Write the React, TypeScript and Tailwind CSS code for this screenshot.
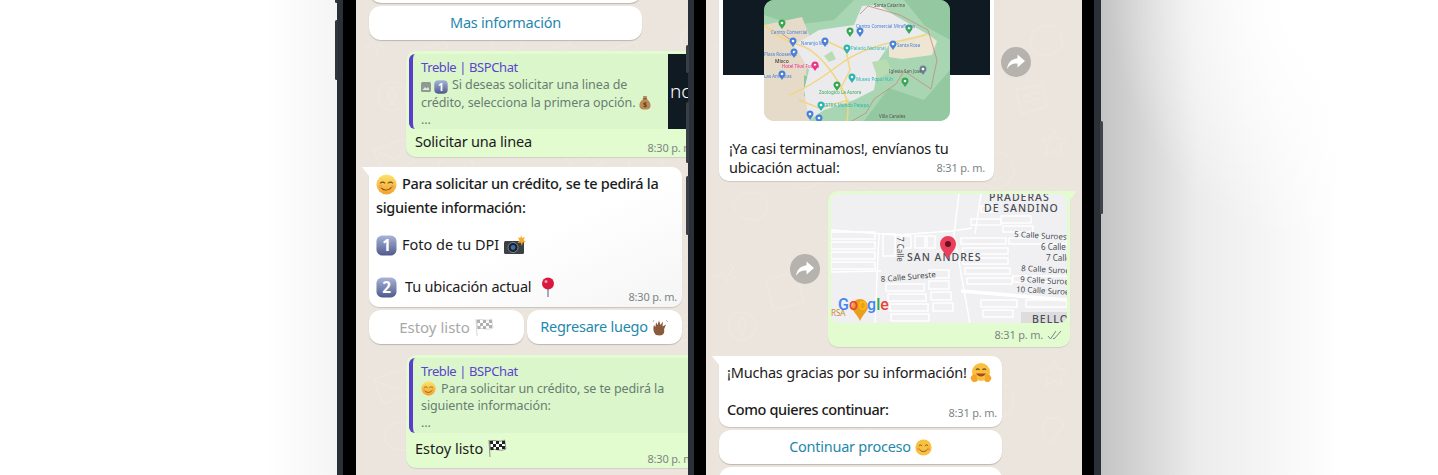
import React from "react";

const font = { fontFamily: '"Noto Sans", sans-serif' };

const Wallpaper = ({ id }: { id: string }) => (
    <svg className="absolute inset-0 w-full h-full" aria-hidden="true">
        <defs>
            <pattern id={id} width="190" height="230" patternUnits="userSpaceOnUse">
                <g fill="none" stroke="#efe9e2" strokeWidth="1" strokeLinecap="round" strokeLinejoin="round">
                    <circle cx="36" cy="96" r="14" />
                    <path d="M36 86l4 10-4 10-4-10z" />
                    <path d="M20 30l8 8-6 6 8 4M8 48l10-4 4 10" />
                    <path d="M60 50l30-8 8 30-30 8z" />
                    <path d="M18 150l30-12 10 24-30 12z M18 150l22 10 18-22" />
                    <path d="M140 30c10-8 24-4 26 8 2 12-10 20-22 16-10-4-12-16-4-24z" />
                    <path d="M120 90l26-6 6 22-26 8z M128 96l14-4 M130 102l14-4" />
                    <path d="M158 130l4 9 9 1-7 6 2 10-8-5-8 5 2-10-7-6 9-1z" />
                    <circle cx="100" cy="170" r="18" />
                    <path d="M92 166h1M108 166h1M92 176c4 4 12 4 16 0" />
                    <path d="M30 200c8-10 24-10 30 0s-4 22-16 20-20-10-14-20z" />
                    <path d="M150 190c6-4 14-2 18 4l-14 20c-8-4-10-16-4-24z" />
                </g>
            </pattern>
        </defs>
        <rect width="100%" height="100%" fill={`url(#${id})`} />
    </svg>
);

const Smirk = ({ size = 21 }: { size?: number }) => (
    <svg width={size} height={size} viewBox="0 0 22 22" className="flex-none">
        <defs>
            <linearGradient id="face" x1="0" y1="0" x2="0" y2="1">
                <stop offset="0" stopColor="#fde36c" />
                <stop offset="1" stopColor="#f3a12a" />
            </linearGradient>
        </defs>
        <circle cx="11" cy="11" r="10.5" fill="url(#face)" />
        <path d="M4.5 9.500c1.500-1.200 3.300-1.200 4.800 0M12.700 9.500c1.500-1.200 3.300-1.200 4.800 0" stroke="#6d4a1b" strokeWidth="1.100" fill="none" strokeLinecap="round" />
        <path d="M6 15c3 2.600 7 2.400 10-.8" stroke="#6d4a1b" strokeWidth="1.100" fill="none" strokeLinecap="round" />
        <circle cx="4.800" cy="13" r="1.800" fill="#f08a5a" opacity="0.5" />
        <circle cx="17.200" cy="13" r="1.800" fill="#f08a5a" opacity="0.5" />
    </svg>
);

const Keycap = ({ n, size = 21 }: { n: string; size?: number }) => (
    <svg width={size} height={size} viewBox="0 0 22 22" className="flex-none">
        <defs>
            <linearGradient id="cap" x1="0" y1="0" x2="0" y2="1">
                <stop offset="0" stopColor="#a9b4d8" />
                <stop offset="1" stopColor="#4f5a8c" />
            </linearGradient>
        </defs>
        <rect x="0.500" y="0.500" width="21" height="21" rx="6" fill="url(#cap)" />
        <text x="11" y="17" textAnchor="middle" fontSize="16" fontWeight="700" fill="#fff" fontFamily='"Noto Sans", sans-serif'>
            {n}
        </text>
    </svg>
);

const Camera = () => (
    <svg width="22" height="20" viewBox="0 0 22 20" className="flex-none">
        <rect x="0" y="6" width="20" height="13" rx="1.500" fill="#3b4047" />
        <circle cx="9" cy="12.500" r="5" fill="#1c2026" stroke="#7d8794" />
        <circle cx="9" cy="12.500" r="2.400" fill="#3b6ea8" />
        <path d="M17 0l1 3 3-1-1.600 3 2.600 2-3.400.4L18 11l-1.400-3.400L13.500 8l2-2.600L14 2.500l2.400.6z" fill="#f7a928" />
    </svg>
);

const Pin = () => (
    <svg width="14" height="20" viewBox="0 0 14 20" className="flex-none">
        <rect x="6" y="10" width="2" height="10" fill="#a7adb4" />
        <circle cx="7" cy="6.500" r="6" fill="#d9173f" />
        <circle cx="5" cy="4.500" r="1.500" fill="#f59bb0" />
    </svg>
);

const Flag = ({ faded }: { faded?: boolean }) => (
    <svg width="20" height="20" viewBox="0 0 20 20" className={faded ? "flex-none opacity-35" : "flex-none"}>
        <path d="M2 2l1 17" stroke="#8a8f96" strokeWidth="1" />
        <path d="M2.500 3c5-2 9 2 15-1l1.500 9c-6 3-10-1-15 1z" fill="#fff" stroke="#222" strokeWidth="0.500" />
        <path d="M3 3h3v3H3zM9 3h3v3H9zM15 3h3v3h-3zM6 6h3v3H6zM12 6h3v3h-3zM3.500 9h3v3h-3zM9 9h3v3H9zM15 8h3v3h-3z" fill="#222" />
    </svg>
);

const Wave = () => (
    <svg width="17" height="17" viewBox="0 0 17 17" className="flex-none">
        <path d="M4 16C1 13 1 9 2 6l1.500 2L4 3l1.500 3L7 1.500 8.500 6 11 2.500 10.500 7.500 14 5.500 12 10.500c1 3-1 6-4 6z" fill="#8a5a3c" />
        <path d="M1 3l1-2M14 1l2 2" stroke="#b9b2a6" strokeWidth="1" />
    </svg>
);

const MoneyBag = () => (
    <svg width="12" height="15" viewBox="0 0 12 15" className="inline-block align-[-3px]">
        <path d="M4 1h4L7.500 4c3 1.500 4.500 4.500 4 7.500C11 14 9 14.500 6 14.500S1 14 .5 11.500C0 8.500 1.500 5.500 4.500 4z" fill="#b98a55" />
        <path d="M3.800 3.800h4.400" stroke="#6f4d28" strokeWidth="1" />
        <text x="6" y="12" textAnchor="middle" fontSize="7" fill="#5d3c1b" fontWeight="700">$</text>
    </svg>
);

const Hug = () => (
    <svg width="22" height="22" viewBox="0 0 22 22" className="flex-none">
        <circle cx="11" cy="10" r="9" fill="#fbbf3f" />
        <path d="M6 8c1-1.500 2.500-1.500 3.500 0M12.500 8c1-1.500 2.500-1.500 3.500 0" stroke="#6d4a1b" fill="none" strokeWidth="1.100" />
        <path d="M6 11.500c2.500 4 7.500 4 10 0z" fill="#a5481f" />
        <path d="M0.500 16c1-3 4-5 6-3l1 6c-2 2-6 1.500-7-3zM21.500 16c-1-3-4-5-6-3l-1 6c2 2 6 1.500 7-3z" fill="#f5a62a" />
    </svg>
);

const Smile = () => (
    <svg width="17" height="17" viewBox="0 0 22 22" className="flex-none">
        <circle cx="11" cy="11" r="10.500" fill="#f8c13f" />
        <path d="M5 9c1.200-1.600 3-1.600 4.200 0M12.800 9c1.200-1.600 3-1.600 4.200 0" stroke="#6d4a1b" strokeWidth="1.200" fill="none" />
        <path d="M6 13.500c2.600 3.600 7.400 3.600 10 0" stroke="#6d4a1b" strokeWidth="1.200" fill="none" />
        <circle cx="4.500" cy="13" r="2" fill="#f0744f" opacity="0.5" />
        <circle cx="17.500" cy="13" r="2" fill="#f0744f" opacity="0.5" />
    </svg>
);

const ForwardButton = ({ className = "" }: { className?: string }) => (
    <div className={`flex-none w-[30px] h-[30px] rounded-full bg-[#b6b2ad] flex items-center justify-center ${className}`}>
        <svg width="20" height="18" viewBox="0 0 20 18">
            <path d="M11.500 1.500L19 8l-7.500 6.500v-4C6.500 10.300 3.500 12 1 16c.8-6 4.500-10 10.500-10.700z" fill="#fff" />
        </svg>
    </div>
);

const ActionButton = ({ children, className = "" }: { children: React.ReactNode; className?: string }) => (
    <div className={`h-[34px] flex items-center justify-center gap-1 rounded-[12px] bg-white shadow-[0_1px_1px_rgba(0,0,0,0.2)] text-[14.5px] tracking-[-0.25px] text-[#1f88ac] ${className}`}>
        {children}
    </div>
);

const Time = ({ children, className = "" }: { children: React.ReactNode; className?: string }) => (
    <span className={`flex-none text-[11px] tracking-[-0.2px] leading-[14px] text-[#7c8585] whitespace-nowrap ${className}`}>{children}</span>
);

const ReplyBubble = ({
    quote,
    thumb,
    children,
}: {
    quote: React.ReactNode;
    thumb?: boolean;
    children: React.ReactNode;
}) => (
    <div className="ml-[50px] w-[296px] rounded-[10px] bg-[#e2fccf] shadow-[0_1px_1px_rgba(0,0,0,0.1)] p-[3px] pb-0">
        <div className="flex h-[75px] rounded-[6px] overflow-hidden bg-[#dcf6cc] border-l-4 border-[#5a3dcc]">
            <div className="w-[255px] flex-none pl-2 pt-[5px]">
                <div className="text-[13px] tracking-[-0.4px] leading-[17px] text-[#5a45cf]">Treble | BSPChat</div>
                <div className="text-[12.5px] tracking-[-0.1px] leading-[17px] text-[#687d71]">{quote}</div>
            </div>
            {thumb && (
                <div className="w-[40px] bg-[#101a22] flex items-center text-white text-[19px] font-light overflow-hidden">
                    <span className="pl-[2px]">nc</span>
                </div>
            )}
        </div>
        {children}
    </div>
);

function MexicoMap() {
    const pins: [number, number, string][] = [
        [18, 25, "#34a853"], [29, 43, "#4a80d8"], [30, 54, "#4a80d8"], [61, 43, "#4a80d8"],
        [86, 33, "#34a853"], [96, 33, "#4a80d8"], [83, 50, "#2bb5b0"], [129, 46, "#4a80d8"],
        [145, 30, "#34a853"], [159, 71, "#6f7f96"], [141, 83, "#34a853"], [51, 67, "#e8348a"],
        [18, 76, "#4a80d8"], [73, 87, "#34a853"], [88, 79, "#2bb5b0"], [57, 107, "#2bb5b0"],
        [46, 116, "#4a80d8"], [55, 120, "#4a80d8"],
    ];
    return (
        <svg width="186" height="121" viewBox="0 0 186 121" className="rounded-[10px] block relative blur-[0.5px]">
            <rect width="186" height="121" fill="#a9d6b2" />
            <path d="M100 121L125 88 160 100 186 70V121zM0 0h90L70 20 30 25 0 15zM140 0h46v40l-25-14z" fill="#93c8a0" />
            <path d="M0 25l38-8 12 30-8 25 4 49H0z" fill="#e6dac9" />
            <path d="M40 75l10 5-2 20-8-4z" fill="#8fc59b" />
            <path d="M30 45l25-15 35-5 8-19 17-1 15 10 35 20-40 10-10 15-5 30-20 10-30 10-15 10-5-30 5-20z" fill="#ebebee" />
            <path d="M125 45l40-10 8 6-5 14-30 4-13-2z" fill="#eee6d2" />
            <path d="M60 56l8-5 4 8-7 3zM108 62l14-3 6 12-14 8z" fill="#b9dcb3" />
            <path d="M0 25c10 8 20 16 35 20s30 22 40 38 10 25 8 38M25 95c15-5 30-15 50-30s40-20 55-23 25-5 33-8M35 100l20 8 30-8M60 40l22 10 4 20-10 20" stroke="#f3d57f" strokeWidth="1.500" fill="none" />
            <path d="M96 14l8-8 32 9 28 15 9 30-6 29-27-18-8 13-22 15-8 14-16 9M30 42l-12-8" stroke="#c48a78" strokeWidth="0.800" fill="none" />
            {pins.map(([x, y, c]) => (
                <g key={`${x}-${y}`}>
                    <path d={`M${x - 3.500} ${y - 2}a3.500 3.500 0 1 1 7 0c0 2-2 3.500-3.500 6-1.500-2.500-3.500-4-3.500-6z`} fill={c} />
                    <circle cx={x} cy={y - 2} r="1.300" fill="#fff" />
                </g>
            ))}
            <g fontSize="4.500" fontFamily='"Noto Sans", sans-serif' fill="#4a80d8">
                <text x="7" y="34">Centro Comercial</text>
                <text x="37" y="45">Naranjo Mall</text>
                <text x="0" y="56">Plaza Roosevelt</text>
                <text x="92" y="28">Centro Comercial Miraflores</text>
                <text x="133" y="47">Santa Rosa</text>
                <text x="0" y="78">Las Americas</text>
                <text x="60" y="107" fill="#2bb5b0">IRTRA Mundo Petapa</text>
                <text x="92" y="81" fill="#2bb5b0">Museo Popol Vuh</text>
                <text x="87" y="50" fill="#2bb5b0">Palacio Nacional</text>
                <text x="55" y="94" fill="#34a853">Zoologico La Aurora</text>
                <text x="18" y="68" fill="#e8348a">Hotel Tikal Futura</text>
                <text x="11" y="63" fill="#222" fontSize="5">Mixco</text>
                <text x="125" y="73" fill="#555">Iglesia San Jose</text>
                <text x="115" y="118" fill="#555">Villa Canales</text>
                <text x="110" y="7" fill="#555">Santa Catarina</text>
            </g>
        </svg>
    );
}

// street blocks: x, y, width, height
const blocks: [number, number, number, number][] = [
    [0, 38, 44, 7], [0, 48, 44, 7], [0, 58, 44, 7], [0, 68, 44, 7],
    [52, 40, 12, 22], [70, 42, 10, 12], [84, 42, 10, 12], [96, 42, 8, 12],
    [55, 90, 38, 7], [57, 100, 38, 7], [59, 110, 38, 7], [60, 120, 38, 7],
    [98, 76, 20, 8], [98, 87, 20, 8], [100, 98, 20, 8], [102, 109, 20, 8],
    [140, 25, 30, 6], [150, 12, 14, 6], [170, 22, 30, 7], [172, 32, 30, 6],
    [130, 44, 45, 6], [132, 54, 45, 6], [132, 64, 45, 6], [134, 74, 45, 6], [136, 84, 45, 6],
    [150, 106, 36, 7], [152, 116, 30, 7],
    [178, 44, 58, 6], [182, 82, 54, 6], [195, 106, 41, 7],
];

function SanAndresMap() {
    return (
        <svg width="236" height="129" viewBox="0 0 236 129" className="block rounded-[8px]">
            <rect width="236" height="129" fill="#f0f0f2" />
            <g stroke="#fff" strokeWidth="1.400" fill="none">
                {blocks.map(([x, y, w, h]) => (
                    <rect key={`${x}-${y}`} x={x} y={y} width={w} height={h} />
                ))}
                <path d="M0 36l66 5 55-4 20-3M48 40l-4 90M128 0l-5 40 16 90M150 0l-6 40M0 78l50-1" />
                <path d="M130 97l106 9" strokeWidth="3.500" />
            </g>
            <rect x="190" y="118" width="46" height="11" fill="#dddde0" />
            <g fontFamily='"Noto Sans", sans-serif' fill="#4a4d52">
                <text x="158" y="7" fontSize="10.500" fontWeight="500" letterSpacing="1">PRADERAS</text>
                <text x="153" y="18" fontSize="10.500" fontWeight="500" letterSpacing="1">DE SANDINO</text>
                <text x="76" y="67" fontSize="10.500" fontWeight="500" letterSpacing="1">SAN ANDRES</text>
                <text x="183" y="43" fontSize="8" transform="rotate(3 183 43)">5 Calle Suroest</text>
                <text x="210" y="56" fontSize="8">6 Calle</text>
                <text x="215" y="67" fontSize="8">7 Calle</text>
                <text x="190" y="77" fontSize="8" transform="rotate(3 190 77)">8 Calle Suroe</text>
                <text x="189" y="88" fontSize="8" transform="rotate(3 189 88)">9 Calle Suroe</text>
                <text x="185" y="98" fontSize="8" transform="rotate(3 185 98)">10 Calle Suroe</text>
                <text x="50" y="88" fontSize="8" transform="rotate(-5 50 88)">8 Calle Sureste</text>
                <text x="66" y="43" fontSize="8" transform="rotate(90 66 43)">7 Calle</text>
                <text x="201" y="129" fontSize="10.500" fontWeight="500" letterSpacing="1">BELLO</text>
                <text x="0" y="122" fontSize="8" fill="#c98a2b">RSA</text>
            </g>
            <path d="M21 113a8 8 0 1 1 16 0c0 4-5 7-8 14-3-7-8-10-8-14z" fill="#e9a021" />
            <path d="M109 50a8 8 0 1 1 16 0c0 5-5 9-8 15-3-6-8-10-8-15z" fill="#e8405c" />
            <circle cx="117" cy="50" r="3" fill="#6b0f20" />
            <text x="7" y="116" fontSize="16" fontWeight="500" fontFamily='"Roboto", sans-serif'>
                <tspan fill="#4285f4">G</tspan>
                <tspan fill="#ea4335">o</tspan>
                <tspan fill="#fbbc05">o</tspan>
                <tspan fill="#4285f4">g</tspan>
                <tspan fill="#34a853">l</tspan>
                <tspan fill="#ea4335">e</tspan>
            </text>
        </svg>
    );
}

function PhoneFrame({ children, className = "" }: { children: React.ReactNode; className?: string }) {
    return <div className={`relative flex flex-none h-full ${className}`}>{children}</div>;
}

export default function App() {
    return (
        <div className="relative flex w-[1438px] h-[475px] overflow-hidden bg-white pl-[337px]" style={font}>
            <div className="absolute left-[265px] top-0 w-[72px] h-full bg-gradient-to-l from-[#f5f5f5] to-white" />
            <div className="absolute left-[1101px] top-0 w-[240px] h-full bg-gradient-to-r from-[#c4c4c4] via-[#ececec] via-40% to-white" />
            <div className="absolute left-[1101px] top-0 w-[240px] h-[260px] bg-[radial-gradient(ellipse_at_top_right,white_15%,transparent_68%)]" />

            <PhoneFrame className="w-[351px] bg-[#2b3038] pl-[6px]">
                <div className="absolute -left-[2px] -top-[20px] w-[3px] h-[23px] bg-[#30353c] rounded-sm" />
                <div className="absolute -left-[2px] top-[20px] w-[3px] h-[60px] bg-[#30353c] rounded-sm" />
                <div className="flex flex-1 bg-black pl-[13px] overflow-hidden">
                    <div className="relative flex-1 bg-[#ebe5dd] overflow-hidden">
                        <Wallpaper id="wall-a" />
                        <div className="relative flex flex-col text-[#1b1b1b]">
                            <ActionButton className="ml-[13px] w-[273px] -mt-[31px]">&nbsp;</ActionButton>
                            <ActionButton className="ml-[13px] w-[273px] mt-[3px]">Mas información</ActionButton>

                            <div className="mt-[11px]">
                                <ReplyBubble
                                    thumb
                                    quote={
                                        <>
                                            <span className="inline-flex items-center gap-[3px] align-[-3px] mr-1">
                                                <svg width="10" height="10" viewBox="0 0 10 10">
                                                    <rect width="10" height="10" rx="1.500" fill="#8f9a92" />
                                                    <path d="M1.500 8l2.500-3 1.500 1.500L7 5l1.500 3z" fill="#e0ecd9" />
                                                </svg>
                                                <Keycap n="1" size={14} />
                                            </span>
                                            Si deseas solicitar una linea de crédito, selecciona la primera opción. <MoneyBag />
                                            <br />...
                                        </>
                                    }
                                >
                                    <div className="flex justify-between items-start h-[28px] pl-[3px] pr-[3px]">
                                        <span className="pl-[3px] text-[14.5px] tracking-[-0.2px] leading-[24px]">Solicitar una linea</span>
                                        <Time className="self-end mb-[2px]">8:30 p. m.</Time>
                                    </div>
                                </ReplyBubble>
                            </div>

                            <div className="relative mt-[10px] ml-[13px] w-[313px] h-[140px] rounded-[10px] rounded-tl-none bg-gradient-to-br from-white via-white to-[#f5f5f5] shadow-[0_1px_1px_rgba(0,0,0,0.15)] pl-[7px] pt-[6px]">
                                <div className="absolute -left-[7px] top-0 w-0 h-0 border-t-[9px] border-t-white border-l-[7px] border-l-transparent" />
                                <div className="flex items-center gap-[5px] h-[22px] text-[14.5px] tracking-[-0.3px] font-medium">
                                    <Smirk />
                                    <span>Para solicitar un crédito, se te pedirá la</span>
                                </div>
                                <div className="h-[24px] leading-[24px] text-[14.5px] tracking-[-0.3px] font-medium">siguiente información:</div>
                                <div className="flex items-center gap-[5px] h-[22px] mt-[15px] text-[14.5px]">
                                    <Keycap n="1" />
                                    <span>Foto de tu DPI</span>
                                    <Camera />
                                </div>
                                <div className="flex items-center gap-[8px] h-[22px] mt-[20px] text-[14.5px] tracking-[-0.2px]">
                                    <Keycap n="2" />
                                    <span>Tu ubicación actual</span>
                                    <span className="ml-[2px]"><Pin /></span>
                                    <Time className="ml-auto mr-[5px] mt-[19px]">8:30 p. m.</Time>
                                </div>
                            </div>

                            <div className="flex gap-[3px] mt-[3px] ml-[13px]">
                                <ActionButton className="w-[155px]">
                                    <span className="text-[15px] tracking-normal text-[#a8a8a8]">Estoy listo</span> <Flag faded />
                                </ActionButton>
                                <ActionButton className="w-[155px]">
                                    Regresare luego <Wave />
                                </ActionButton>
                            </div>

                            <div className="mt-[11px]">
                                <ReplyBubble
                                    quote={
                                        <>
                                            <span className="inline-block align-[-3px] mr-[5px]">
                                                <Smirk size={15} />
                                            </span>
                                            Para solicitar un crédito, se te pedirá la siguiente información:
                                            <br />...
                                        </>
                                    }
                                >
                                    <div className="flex justify-between items-start h-[35px] pl-[3px] pr-[3px]">
                                        <span className="flex items-center gap-[4px] pl-[3px] mt-[3px] text-[14.5px] leading-[24px]">
                                            Estoy listo <Flag />
                                        </span>
                                        <Time className="self-end mb-[2px]">8:30 p. m.</Time>
                                    </div>
                                </ReplyBubble>
                            </div>
                        </div>
                    </div>
                </div>
            </PhoneFrame>

            <PhoneFrame className="w-[413px] bg-[#2b3038] pl-[6px] pr-[7px]">
                <div className="absolute -left-[2px] top-[45px] w-[3px] h-[28px] bg-[#3a3f46] rounded-sm" />
                <div className="absolute -left-[2px] top-[102px] w-[3px] h-[61px] bg-[#3a3f46] rounded-sm" />
                <div className="absolute -left-[2px] top-[176px] w-[3px] h-[59px] bg-[#3a3f46] rounded-sm" />
                <div className="absolute -right-[2px] top-[121px] w-[3px] h-[93px] bg-[#3f444b] rounded-sm" />
                <div className="flex flex-1 bg-black px-[12px] overflow-hidden">
                    <div className="relative flex-1 bg-[#ebe5dd] overflow-hidden">
                        <Wallpaper id="wall-b" />
                        <div className="relative flex flex-col text-[#1b1b1b]">
                            <div className="flex items-start ml-[13px] gap-[7px]">
                                <div className="w-[275px] h-[181px] rounded-b-[10px] bg-white shadow-[0_1px_1px_rgba(0,0,0,0.12)] px-[4px]">
                                    <div className="relative flex justify-center h-[121px]">
                                        <div className="absolute inset-x-0 top-0 h-[75px] bg-[#101a22]" />
                                        <MexicoMap />
                                    </div>
                                    <div className="relative pl-[6px] pr-[5px] pt-[18px] text-[14.5px] tracking-[-0.2px] leading-[19px]">
                                        <div>¡Ya casi terminamos!, envíanos tu</div>
                                        <div className="flex justify-between">
                                            <span>ubicación actual:</span>
                                            <Time className="mt-[3px]">8:31 p. m.</Time>
                                        </div>
                                    </div>
                                </div>
                                <ForwardButton className="mt-[47px]" />
                            </div>

                            <div className="flex justify-end items-center gap-2 pr-[12px] mt-[10px]">
                                <ForwardButton />
                                <div className="relative w-[242px] h-[156px] rounded-[10px] rounded-tr-none bg-[#e2fccf] shadow-[0_1px_1px_rgba(0,0,0,0.1)] p-[3px]">
                                    <div className="absolute -right-[7px] top-0 w-0 h-0 border-t-[9px] border-t-[#e2fccf] border-r-[7px] border-r-transparent" />
                                    <SanAndresMap />
                                    <div className="flex justify-end items-center gap-[4px] h-[24px] pr-[4px]">
                                        <Time>8:31 p. m.</Time>
                                        <svg width="16" height="10" viewBox="0 0 16 10">
                                            <path d="M1 6l2.500 3L9 1M6 8l1 1 7-8" stroke="#7c8585" strokeWidth="1" fill="none" />
                                        </svg>
                                    </div>
                                </div>
                            </div>

                            <div className="relative mt-[9px] ml-[13px] w-[283px] h-[71px] rounded-[10px] rounded-tl-none bg-white shadow-[0_1px_1px_rgba(0,0,0,0.15)] pl-[8px] pt-[6px] text-[14.5px] tracking-[-0.2px]">
                                <div className="absolute -left-[7px] top-0 w-0 h-0 border-t-[9px] border-t-white border-l-[7px] border-l-transparent" />
                                <div className="flex items-center gap-[3px] h-[22px]">
                                    <span>¡Muchas gracias por su información!</span>
                                    <Hug />
                                </div>
                                <div className="flex justify-between items-end mt-[15px] pr-[5px] font-medium tracking-[-0.4px]">
                                    <span>Como quieres continuar:</span>
                                    <Time className="font-normal mb-[1px]">8:31 p. m.</Time>
                                </div>
                            </div>

                            <ActionButton className="ml-[13px] w-[283px] mt-[3px]">
                                Continuar proceso <Smile />
                            </ActionButton>
                            <ActionButton className="ml-[13px] w-[283px] mt-[3px]">&nbsp;</ActionButton>
                        </div>
                    </div>
                </div>
            </PhoneFrame>
        </div>
    );
}
